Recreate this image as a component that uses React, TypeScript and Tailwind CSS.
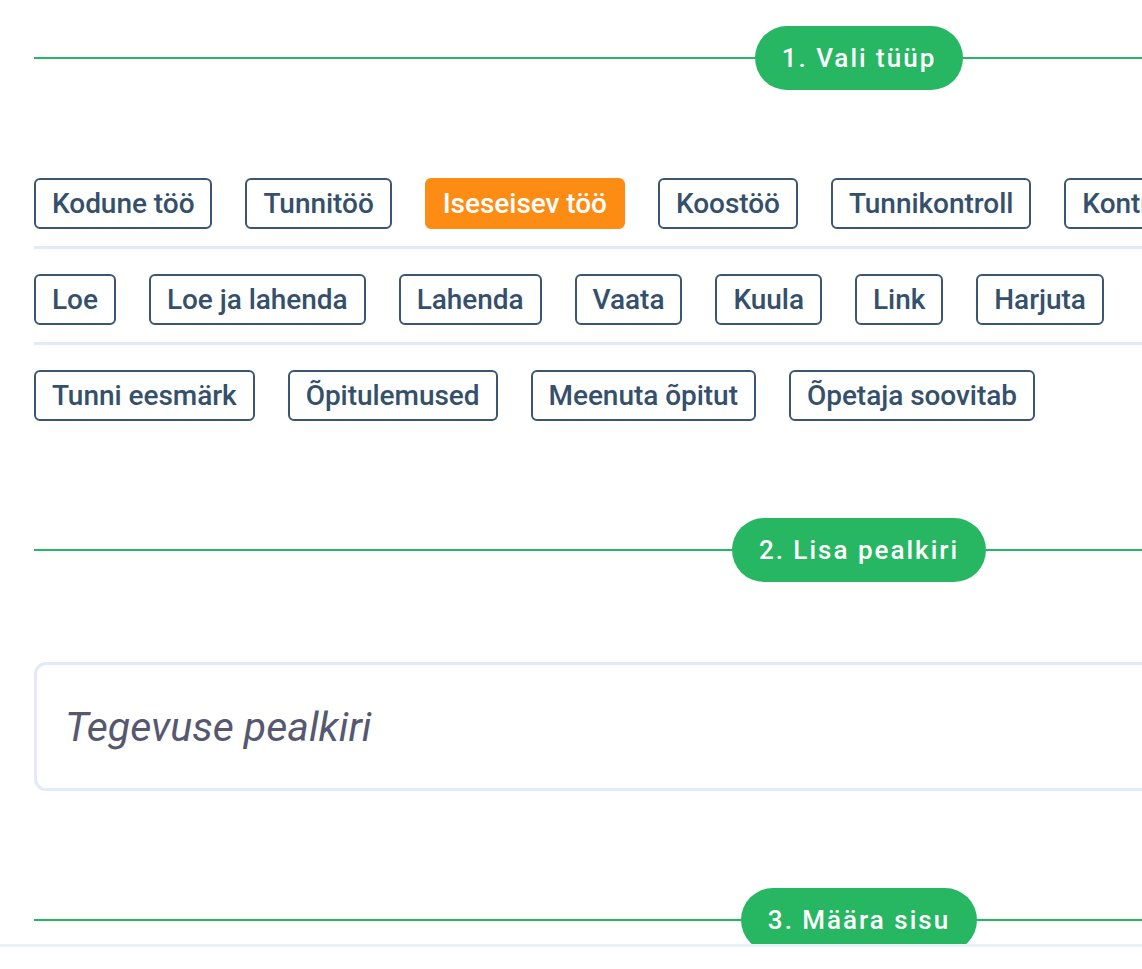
import React, { useState } from 'react';

const typeRows: string[][] = [
    ['Kodune töö', 'Tunnitöö', 'Iseseisev töö', 'Koostöö', 'Tunnikontroll', 'Kontrolltöö'],
    ['Loe', 'Loe ja lahenda', 'Lahenda', 'Vaata', 'Kuula', 'Link', 'Harjuta'],
    ['Tunni eesmärk', 'Õpitulemused', 'Meenuta õpitut', 'Õpetaja soovitab'],
];

// section divider with the green step label in the middle
const StepHeader: React.FC<{ label: string }> = ({ label }) => (
    <div className="flex items-center">
        <div className="flex-1 h-[2px] bg-[#27b662]" />
        <div className="h-[64px] px-[27px] flex items-center rounded-full bg-[#27b662] text-white text-[26px] font-medium tracking-[2px] leading-none">
            {label}
        </div>
        <div className="flex-1 h-[2px] bg-[#27b662]" />
    </div>
);

const App: React.FC = () => {
    const [selected, setSelected] = useState('Iseseisev töö');
    const [title, setTitle] = useState('');

    return (
        <div className="w-full min-h-screen bg-white overflow-hidden font-['Roboto',sans-serif]">
            <div className="w-[1650px] ml-[34px] pt-[26px] pb-[40px]">
                <StepHeader label="1. Vali tüüp" />

                <div className="mt-[88px]">
                    {typeRows.map((row, i) => (
                        <div
                            key={i}
                            className={
                                i < typeRows.length - 1
                                    ? 'flex gap-[33px] pb-[17px] mb-[25px] border-b-[3px] border-[#e3e9fb]'
                                    : 'flex gap-[33px]'
                            }
                        >
                            {row.map((item) => {
                                const active = item === selected;
                                return (
                                    <button
                                        key={item}
                                        onClick={() => setSelected(item)}
                                        className={
                                            active
                                                ? 'shrink-0 px-4 py-[6px] border-2 border-[#fd8c14] bg-[#fd8c14] text-white rounded-[6px] text-[28px] leading-[35px] font-medium tracking-[-0.04px]'
                                                : 'shrink-0 px-4 py-[6px] border-2 border-[#3a5672] bg-white text-[#34506b] rounded-[6px] text-[28px] leading-[35px] font-medium tracking-[-0.04px]'
                                        }
                                    >
                                        {item}
                                    </button>
                                );
                            })}
                        </div>
                    ))}
                </div>

                <div className="mt-[97px]">
                    <StepHeader label="2. Lisa pealkiri" />
                </div>

                <div className="mt-[80px]">
                    <input
                        type="text"
                        value={title}
                        onChange={(e) => setTitle(e.target.value)}
                        placeholder="Tegevuse pealkiri"
                        className="w-full h-[129px] px-[28px] border-[3px] border-[#e3e9fb] rounded-[12px] text-[41px] italic text-[#555870] placeholder:text-[#555870] focus:outline-none"
                    />
                </div>

                <div className="mt-[97px]">
                    <StepHeader label="3. Määra sisu" />
                </div>
            </div>

            {/* sticky footer strip */}
            <div className="fixed bottom-0 left-0 right-0 h-[25px] bg-white border-t-[3px] border-[#e9f1fa]" />
        </div>
    );
};

export default App;
